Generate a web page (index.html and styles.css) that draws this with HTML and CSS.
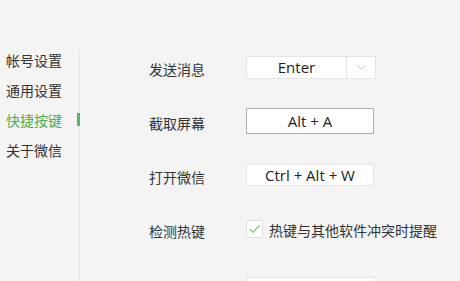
FILE: index.html
```html
<!DOCTYPE html>
<html lang="zh-CN">
<head>
<meta charset="utf-8">
<title>快捷按键</title>
<link rel="stylesheet" href="styles.css">
</head>
<body>
<div class="app">
  <nav class="nav">
    <div class="nav-item">帐号设置</div>
    <div class="nav-item">通用设置</div>
    <div class="nav-item active">快捷按键</div>
    <div class="nav-item">关于微信</div>
  </nav>
  <div class="divider"></div>
  <main class="main">
    <div class="row">
      <div class="label">发送消息</div>
      <div class="combo">
        <div class="combo-value">Enter</div>
        <div class="combo-arrow">
          <svg width="10" height="6" viewBox="0 0 10 6"><path d="M1 1 L5 5 L9 1" fill="none" stroke="#c8c8c8" stroke-width="1"/></svg>
        </div>
      </div>
    </div>
    <div class="row">
      <div class="label">截取屏幕</div>
      <div class="key key-focus">Alt + A</div>
    </div>
    <div class="row">
      <div class="label">打开微信</div>
      <div class="key">Ctrl + Alt + W</div>
    </div>
    <div class="row">
      <div class="label">检测热键</div>
      <label class="check">
        <span class="check-box">
          <svg width="13" height="10" viewBox="0 0 13 10"><path d="M1.5 5 L5 8.5 L11.5 1.5" fill="none" stroke="#7cc47f" stroke-width="1.2"/></svg>
        </span>
        <span class="check-text">热键与其他软件冲突时提醒</span>
      </label>
    </div>
    <div class="row-last">
      <div class="key key-bottom"></div>
    </div>
  </main>
</div>
</body>
</html>
```
FILE: styles.css
```css
html, body {
  margin: 0;
  padding: 0;
  background: #f4f4f4;
  overflow: hidden;
}
body {
  font-family: "Noto Sans CJK SC", "Noto Sans", sans-serif;
  font-size: 14px;
  color: #333;
}
.app {
  display: flex;
  height: 281px;
  overflow: hidden;
}
.nav {
  width: 79px;
  padding-top: 45px;
  box-sizing: border-box;
  flex-shrink: 0;
}
.nav-item {
  position: relative;
  height: 30px;
  line-height: 30px;
  padding-left: 6px;
  color: #333;
}
.nav-item.active {
  color: #4cb052;
}
.nav-item.active::after {
  content: "";
  position: absolute;
  right: -1px;
  top: 8px;
  width: 3px;
  height: 13px;
  background: #56b95a;
}
.divider {
  width: 1px;
  margin-top: 50px;
  background: #e4e4e4;
  flex-shrink: 0;
}
.main {
  padding-left: 69px;
  padding-top: 40px;
  flex: 1;
  overflow: hidden;
}
.row {
  height: 54px;
  display: flex;
  align-items: center;
}
.label {
  width: 97px;
  flex-shrink: 0;
  padding-top: 3px;
}
.combo {
  display: flex;
  height: 23px;
  box-sizing: border-box;
  border: 1px solid #e4e4e4;
  background: #fff;
}
.combo-value {
  width: 99px;
  text-align: center;
  font-family: "Open Sans", "Noto Sans", sans-serif;
  font-size: 15px;
  line-height: 21px;
  color: #222;
}
.combo-arrow {
  width: 28px;
  border-left: 1px solid #e4e4e4;
  display: flex;
  align-items: center;
  justify-content: center;
}
.key {
  width: 128px;
  height: 22px;
  box-sizing: border-box;
  border: 1px solid #e6e6e6;
  background: #fff;
  text-align: center;
  font-family: "Open Sans", "Noto Sans", sans-serif;
  font-size: 15px;
  line-height: 20px;
  color: #222;
}
.key-focus {
  height: 26px;
  line-height: 24px;
  border-color: #adadad;
}
.check {
  display: flex;
  align-items: center;
}
.check-box {
  width: 17px;
  height: 18px;
  box-sizing: border-box;
  border: 1px solid #e0e0e0;
  background: #fff;
  display: flex;
  align-items: center;
  justify-content: center;
}
.check-text {
  margin-left: 6px;
  padding-top: 2px;
}
.row-last {
  padding-top: 21px;
  padding-left: 98px;
}
.key-bottom {
  width: 129px;
  height: 26px;
}
```
